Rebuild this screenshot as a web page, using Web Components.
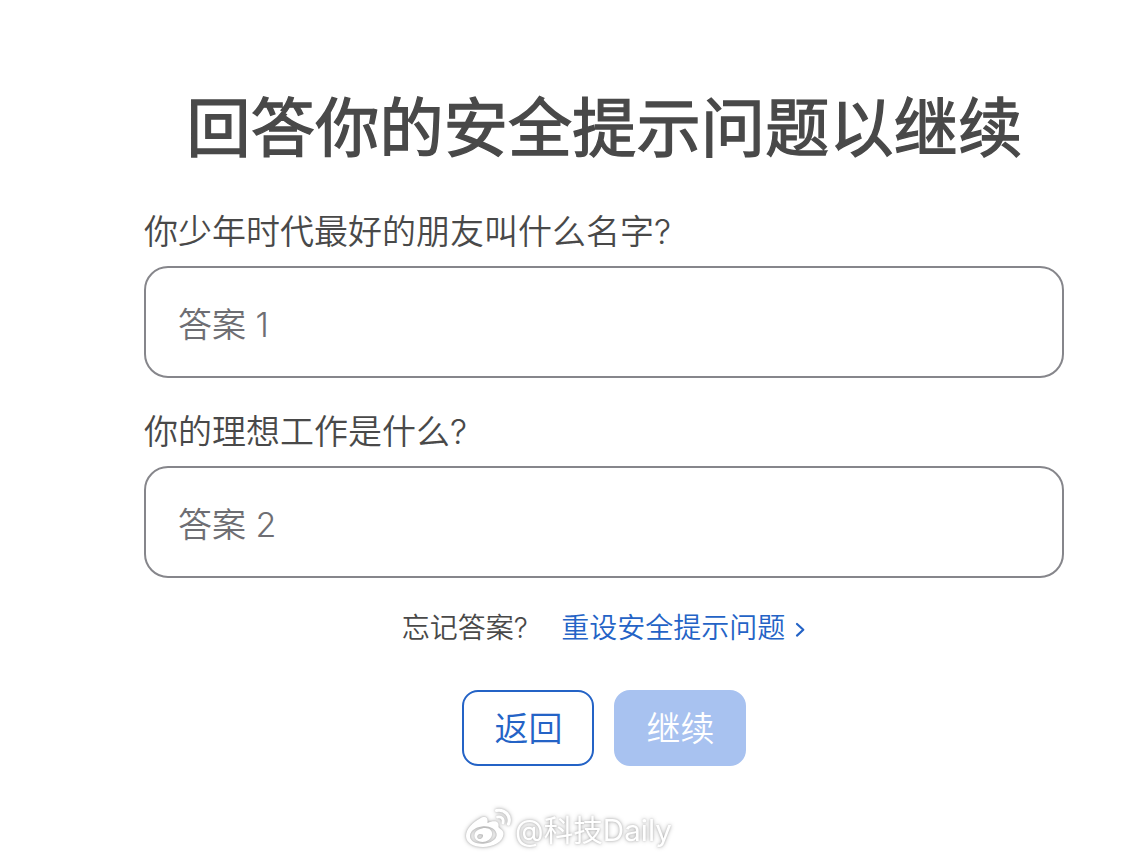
<!DOCTYPE html>
<html lang="zh-CN">
<head>
<meta charset="utf-8">
<title>安全提示问题</title>
<style>
    body {
        margin: 0;
        background: #fff;
        color: #494949;
        font-family: Inter, "Noto Sans CJK SC", sans-serif;
        font-weight: 360;
    }
</style>
</head>
<body>
<security-form heading="回答你的安全提示问题以继续">
    <answer-field label="你少年时代最好的朋友叫什么名字?" hint="答案 1"></answer-field>
    <answer-field label="你的理想工作是什么?" hint="答案 2"></answer-field>
    <reset-hint slot="help" question="忘记答案?">重设安全提示问题</reset-hint>
    <form-button slot="actions">返回</form-button>
    <form-button slot="actions" primary>继续</form-button>
    <weibo-mark slot="footer">@科技Daily</weibo-mark>
</security-form>

<script>
"use strict";

class SecurityForm extends HTMLElement {
    connectedCallback() {
        const shadowRoot = this.attachShadow({ mode: 'open' });
        shadowRoot.innerHTML = `
        <style>
            :host {
                display: flex;
                flex-direction: column;
                box-sizing: border-box;
                width: 1140px;
                height: 860px;
                padding: 80px 76px 0 144px;
                overflow: hidden;
            }
            h1 {
                margin: 0;
                height: 96px;
                font-size: 64px;
                font-weight: 400;
                -webkit-text-stroke: 1.4px currentColor;
                line-height: 96px;
                letter-spacing: 0.3px;
                text-indent: 1px;
                text-align: center;
                white-space: nowrap;
            }
            .fields {
                display: flex;
                flex-direction: column;
                gap: 24px;
                margin-top: 26px;
            }
            .help { margin-top: 30px; }
            .actions {
                display: flex;
                justify-content: center;
                gap: 20px;
                margin-top: 42px;
            }
            .footer {
                display: flex;
                justify-content: center;
                margin-top: 40px;
                padding-right: 71px;
            }
        </style>
        <h1>${this.getAttribute('heading')}</h1>
        <div class="fields"><slot></slot></div>
        <div class="help"><slot name="help"></slot></div>
        <div class="actions"><slot name="actions"></slot></div>
        <div class="footer"><slot name="footer"></slot></div>
        `
    }
}

class AnswerField extends HTMLElement {
    connectedCallback() {
        const shadowRoot = this.attachShadow({ mode: 'open' });
        shadowRoot.innerHTML = `
        <style>
            :host { display: block; }
            .label {
                height: 64px;
                font-size: 34px;
                line-height: 60px;
            }
            .box {
                display: flex;
                align-items: center;
                box-sizing: border-box;
                height: 112px;
                padding: 1px 32px 1px;
                border: 2px solid #86868b;
                border-radius: 24px;
                color: #6e6e73;
                font-size: 34px;
            }
            input {
                flex: 1;
                min-width: 0;
                border: 0;
                outline: 0;
                background: none;
                font: inherit;
            }
        </style>
        <div class="label">${this.getAttribute('label')}</div>
        <label class="box"><span>${this.getAttribute('hint')}</span><input type="text"></label>
        `
    }
}

class ResetHint extends HTMLElement {
    connectedCallback() {
        const shadowRoot = this.attachShadow({ mode: 'open' });
        shadowRoot.innerHTML = `
        <style>
            :host {
                display: flex;
                justify-content: center;
                align-items: center;
                height: 40px;
                font-size: 28px;
                line-height: 40px;
            }
            a {
                display: flex;
                align-items: center;
                margin-left: 33.5px;
                color: #2463c6;
                text-decoration: none;
            }
            svg {
                width: 12px;
                height: 16px;
                margin: 4px 0 0 9px;
            }
        </style>
        <span>${this.getAttribute('question')}</span>
        <a href="#"><slot></slot><svg viewBox="0 0 12 16" fill="none" stroke="currentColor" stroke-width="2.2" stroke-linecap="round" stroke-linejoin="round"><path d="M3 2L9.300 7.800L3 13.600"/></svg></a>
        `
    }
}

class FormButton extends HTMLElement {
    connectedCallback() {
        const shadowRoot = this.attachShadow({ mode: 'open' });
        shadowRoot.innerHTML = `
        <style>
            :host { display: block; }
            button {
                box-sizing: border-box;
                width: 132px;
                height: 76px;
                padding: 1px 0 0 1px;
                border: 2px solid #2463c6;
                border-radius: 16px;
                background: #fff;
                color: #2463c6;
                font: inherit;
                font-size: 34px;
                line-height: 72px;
            }
            :host([primary]) button {
                border-color: #a8c2f0;
                background: #a8c2f0;
                color: #fff;
            }
        </style>
        <button type="button"><slot></slot></button>
        `
    }
}

class WeiboMark extends HTMLElement {
    connectedCallback() {
        const shadowRoot = this.attachShadow({ mode: 'open' });
        shadowRoot.innerHTML = `
        <style>
            :host {
                display: flex;
                align-items: center;
                gap: 2px;
                height: 46px;
                color: #fff;
                font: 400 29.6px/46px Inter, "Noto Sans CJK SC", sans-serif;
                white-space: nowrap;
                filter: drop-shadow(0 0 1px rgba(0, 0, 0, 0.18)) drop-shadow(0 0 2px rgba(0, 0, 0, 0.28));
            }
            svg { width: 48px; height: 42px; }
            span { padding-top: 1px; }
        </style>
        <svg viewBox="0 0 48 42">
            <path fill="#fff" fill-rule="evenodd" d="M15 10.500C19 8 23.500 8.500 22.500 15C28 12.500 34.500 12 33.500 18.500C33 20.500 38.500 21 38.500 26C38 34 28 39 18 39C8 39 1 34.500 1 28C1 21 8 14 15 10.500ZM17 18.500C9 19.500 4.500 24 5 29C6 34 12 36.500 20 35.500C28 34.500 32.500 30 31.500 25.500C30.500 20.500 24 17.500 17 18.500Z"/>
            <path fill="#fff" fill-rule="evenodd" d="M17 20.500C23 19 28 22 27 27C26 32 20 35 14.500 33.500C10 32 8 28 10.500 24C12 22 14.500 21 17 20.500ZM15 26C12 26.500 11 30 14 31C17 31.500 19 28 17.500 26.500Z"/>
            <g fill="none" stroke="#fff" stroke-linecap="round">
                <path d="M31.500 2.500C40 1 46.500 8 43.500 16" stroke-width="3.200"/>
                <path d="M32.500 9C36.500 8 39 11 38 15" stroke-width="2.800"/>
            </g>
        </svg>
        <span><slot></slot></span>
        `
    }
}

customElements.define('security-form', SecurityForm);
customElements.define('answer-field', AnswerField);
customElements.define('reset-hint', ResetHint);
customElements.define('form-button', FormButton);
customElements.define('weibo-mark', WeiboMark);
</script>
</body>
</html>
